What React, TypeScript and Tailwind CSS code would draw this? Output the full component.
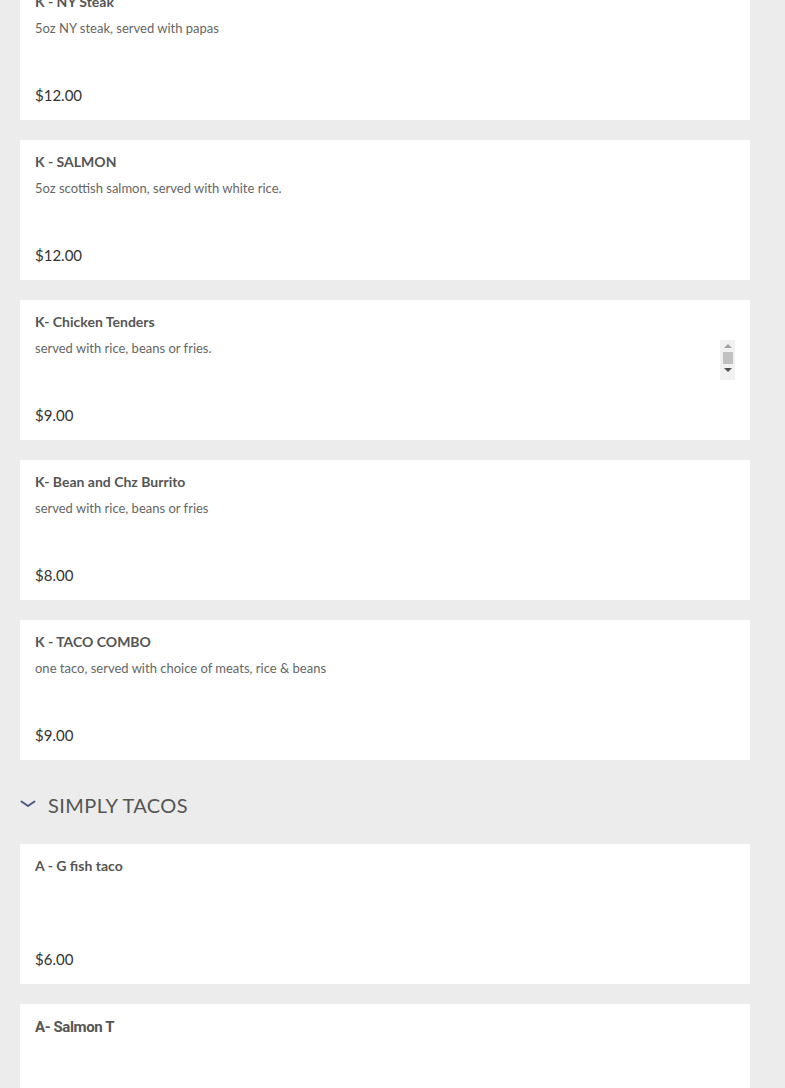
import React from "react";

type Item = { title: string; desc?: string; price: string; scroll?: boolean; roboto?: boolean };

const group1: Item[] = [
  { title: "K - NY Steak", desc: "5oz NY steak, served with papas", price: "$12.00" },
  { title: "K - SALMON", desc: "5oz scottish salmon, served with white rice.", price: "$12.00" },
  { title: "K- Chicken Tenders", desc: "served with rice, beans or fries.", price: "$9.00", scroll: true },
  { title: "K- Bean and Chz Burrito", desc: "served with rice, beans or fries", price: "$8.00" },
  { title: "K - TACO COMBO", desc: "one taco, served with choice of meats, rice & beans", price: "$9.00" },
];

const group2: Item[] = [
  { title: "A - G fish taco", price: "$6.00" },
  { title: "A- Salmon T", price: "", roboto: true },
];

function Card({ item }: { item: Item }) {
  return (
    <div className="relative flex h-[140px] flex-col bg-white px-[15px] pt-[12px] pb-[15px]">
      <div
        className={
          item.roboto
            ? "h-[20px] text-[15px] font-bold leading-[22px] tracking-[-0.4px] text-[#555] [font-family:Roboto,sans-serif]"
            : "h-[20px] text-[14px] font-bold leading-[20px] text-[#555]"
        }
      >
        {item.title}
      </div>
      {item.desc && (
        <div className="mt-[6px] h-[20px] text-[13px] leading-[20px] text-[#666]">{item.desc}</div>
      )}
      {item.price && (
        <div className="mt-auto h-[20px] text-[15px] leading-[20px] text-[#333]">{item.price}</div>
      )}
      {item.scroll && (
        <div className="absolute right-[15px] top-[40px] flex h-[40px] w-[15px] flex-col items-center bg-[#f1f1f1]">
          <div className="mt-[4px] h-0 w-0 border-x-[4px] border-b-[4px] border-x-transparent border-b-[#a3a3a3]" />
          <div className="mt-[4px] h-[12px] w-[10px] bg-[#c1c1c1]" />
          <div className="mt-[4px] h-0 w-0 border-x-[4px] border-t-[4px] border-x-transparent border-t-[#505050]" />
        </div>
      )}
    </div>
  );
}

export default function App() {
  return (
    <div className="h-[1088px] w-[785px] overflow-hidden bg-[#ececec] [font-family:Lato,'Open_Sans',sans-serif]">
      <div className="mt-[-20px] ml-[20px] flex w-[730px] flex-col gap-[20px]">
        {group1.map((it) => (
          <Card key={it.title} item={it} />
        ))}
      </div>
      <div className="ml-[20px] flex h-[84px] items-center gap-[12px] pt-[6px]">
        <svg width="16" height="10" viewBox="0 0 16 10" className="mt-[-2px]">
          <path d="M1.5 2.5 L8 7 L14.5 2.5" fill="none" stroke="#4b5a85" strokeWidth="2" strokeLinecap="round" strokeLinejoin="round" />
        </svg>
        <div className="text-[20px] leading-[24px] tracking-[0.4px] text-[#555]">SIMPLY TACOS</div>
      </div>
      <div className="ml-[20px] flex w-[730px] flex-col gap-[20px]">
        {group2.map((it) => (
          <Card key={it.title} item={it} />
        ))}
      </div>
    </div>
  );
}
